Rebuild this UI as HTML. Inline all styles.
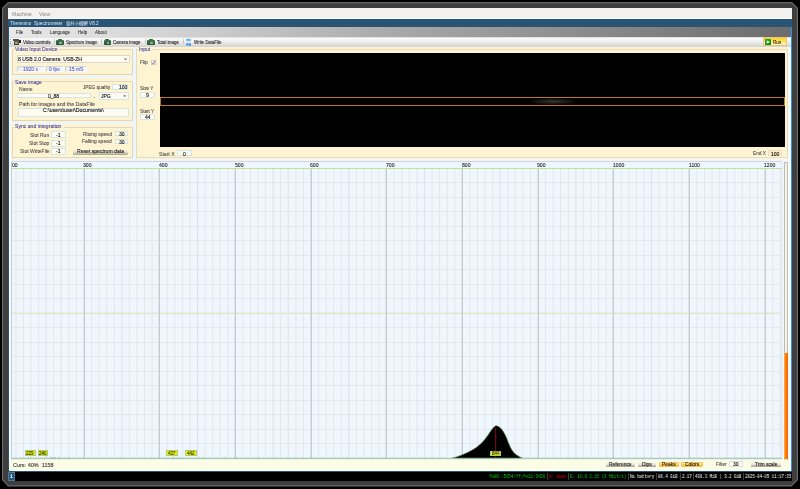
<!DOCTYPE html>
<html><head><meta charset="utf-8">
<style>
html,body{margin:0;padding:0;}
body{width:800px;height:489px;position:relative;overflow:hidden;background:#000;}
.r{position:absolute;box-sizing:border-box;}
.t{position:absolute;white-space:pre;line-height:1;transform-origin:0 0;will-change:transform;-webkit-text-stroke-width:0.12px;}
svg{position:absolute;left:0;top:0;}
</style></head><body>

<svg width="800" height="489" viewBox="0 0 800 489">
<polygon points="8,2 792,2 798,8 798,480 791.5,486.5 8,486.5 2,480 2,8" fill="#686868"/>
<polygon points="8.5,3.2 791.5,3.2 796.8,8.5 796.8,479.5 791,485.3 8.5,485.3 3.2,479.5 3.2,8.5" fill="#3e3e3e"/>
</svg>
<div class="r" style="left:8px;top:8px;width:784.00px;height:472.60px;background:#eef5fd;"></div>
<div class="r" style="left:8px;top:8px;width:784.00px;height:11.00px;background:#f3f2f1;border-bottom:0.6px solid #ffffff;"></div>
<div class="t" style="left:12.00px;top:12.00px;color:#a0a0a0;font-family:'Liberation Sans', sans-serif;font-size:5.3px;">Machine</div>
<div class="t" style="left:39.00px;top:12.00px;color:#a0a0a0;font-family:'Liberation Sans', sans-serif;font-size:5.3px;">View</div>
<div class="r" style="left:8px;top:19.2px;width:784.00px;height:8.10px;background:#285577;"></div>
<div class="t" style="left:9.50px;top:22.00px;color:#dfe8f0;font-family:'Liberation Sans', sans-serif;font-size:4.7px;transform:scaleX(0.95);-webkit-text-stroke-width:0;">Theremino</div>
<div class="t" style="left:33.90px;top:22.00px;color:#dfe8f0;font-family:'Liberation Sans', sans-serif;font-size:4.7px;transform:scaleX(1.02);-webkit-text-stroke-width:0;">Spectrometer</div>
<svg width="800" height="489"><line x1="68.20" y1="21.20" x2="68.20" y2="21.90" stroke="rgba(245,248,252,0.85)" stroke-width="0.55"/><line x1="66.50" y1="22.00" x2="69.90" y2="22.00" stroke="rgba(245,248,252,0.85)" stroke-width="0.55"/><line x1="66.50" y1="22.00" x2="66.50" y2="22.80" stroke="rgba(245,248,252,0.85)" stroke-width="0.55"/><line x1="69.90" y1="22.00" x2="69.90" y2="22.80" stroke="rgba(245,248,252,0.85)" stroke-width="0.55"/><line x1="67.00" y1="23.10" x2="69.40" y2="23.10" stroke="rgba(245,248,252,0.85)" stroke-width="0.55"/><line x1="67.00" y1="23.10" x2="67.00" y2="25.60" stroke="rgba(245,248,252,0.85)" stroke-width="0.55"/><line x1="69.40" y1="23.10" x2="69.40" y2="25.60" stroke="rgba(245,248,252,0.85)" stroke-width="0.55"/><line x1="67.00" y1="25.60" x2="69.40" y2="25.60" stroke="rgba(245,248,252,0.85)" stroke-width="0.55"/><line x1="67.40" y1="24.20" x2="69.00" y2="24.60" stroke="rgba(245,248,252,0.85)" stroke-width="0.55"/><line x1="71.60" y1="21.30" x2="70.80" y2="25.60" stroke="rgba(245,248,252,0.85)" stroke-width="0.55"/><line x1="71.10" y1="22.60" x2="72.40" y2="22.60" stroke="rgba(245,248,252,0.85)" stroke-width="0.55"/><line x1="72.40" y1="22.60" x2="71.40" y2="24.60" stroke="rgba(245,248,252,0.85)" stroke-width="0.55"/><line x1="71.50" y1="23.60" x2="72.20" y2="24.20" stroke="rgba(245,248,252,0.85)" stroke-width="0.55"/><line x1="73.40" y1="21.20" x2="73.40" y2="25.70" stroke="rgba(245,248,252,0.85)" stroke-width="0.55"/><line x1="73.50" y1="23.00" x2="74.50" y2="23.80" stroke="rgba(245,248,252,0.85)" stroke-width="0.55"/><line x1="77.00" y1="21.20" x2="77.00" y2="25.50" stroke="rgba(245,248,252,0.85)" stroke-width="0.55"/><line x1="77.00" y1="25.50" x2="76.50" y2="25.10" stroke="rgba(245,248,252,0.85)" stroke-width="0.55"/><line x1="75.90" y1="22.80" x2="75.30" y2="24.60" stroke="rgba(245,248,252,0.85)" stroke-width="0.55"/><line x1="78.10" y1="22.80" x2="78.80" y2="24.40" stroke="rgba(245,248,252,0.85)" stroke-width="0.55"/><line x1="79.50" y1="21.80" x2="80.60" y2="21.80" stroke="rgba(245,248,252,0.85)" stroke-width="0.55"/><line x1="79.50" y1="21.80" x2="79.50" y2="25.20" stroke="rgba(245,248,252,0.85)" stroke-width="0.55"/><line x1="80.60" y1="21.80" x2="80.60" y2="25.20" stroke="rgba(245,248,252,0.85)" stroke-width="0.55"/><line x1="79.50" y1="23.40" x2="80.60" y2="23.40" stroke="rgba(245,248,252,0.85)" stroke-width="0.55"/><line x1="79.50" y1="25.20" x2="80.60" y2="25.20" stroke="rgba(245,248,252,0.85)" stroke-width="0.55"/><line x1="81.10" y1="21.70" x2="83.30" y2="21.70" stroke="rgba(245,248,252,0.85)" stroke-width="0.55"/><line x1="82.20" y1="21.30" x2="82.20" y2="25.70" stroke="rgba(245,248,252,0.85)" stroke-width="0.55"/><line x1="81.20" y1="23.00" x2="83.20" y2="23.00" stroke="rgba(245,248,252,0.85)" stroke-width="0.55"/><line x1="81.40" y1="24.30" x2="83.00" y2="24.30" stroke="rgba(245,248,252,0.85)" stroke-width="0.55"/><line x1="81.10" y1="25.60" x2="83.30" y2="25.60" stroke="rgba(245,248,252,0.85)" stroke-width="0.55"/><line x1="83.80" y1="21.80" x2="84.90" y2="21.80" stroke="rgba(245,248,252,0.85)" stroke-width="0.55"/><line x1="83.80" y1="21.80" x2="83.80" y2="25.20" stroke="rgba(245,248,252,0.85)" stroke-width="0.55"/><line x1="84.90" y1="21.80" x2="84.90" y2="25.20" stroke="rgba(245,248,252,0.85)" stroke-width="0.55"/><line x1="83.80" y1="23.40" x2="84.90" y2="23.40" stroke="rgba(245,248,252,0.85)" stroke-width="0.55"/><line x1="83.80" y1="25.20" x2="84.90" y2="25.20" stroke="rgba(245,248,252,0.85)" stroke-width="0.55"/><line x1="85.50" y1="21.50" x2="87.40" y2="21.50" stroke="rgba(245,248,252,0.85)" stroke-width="0.55"/><line x1="85.50" y1="21.50" x2="85.50" y2="25.70" stroke="rgba(245,248,252,0.85)" stroke-width="0.55"/><line x1="87.40" y1="21.50" x2="87.40" y2="23.60" stroke="rgba(245,248,252,0.85)" stroke-width="0.55"/><line x1="85.50" y1="22.60" x2="87.40" y2="22.60" stroke="rgba(245,248,252,0.85)" stroke-width="0.55"/><line x1="85.50" y1="23.60" x2="87.40" y2="23.60" stroke="rgba(245,248,252,0.85)" stroke-width="0.55"/><line x1="86.20" y1="23.70" x2="87.60" y2="25.60" stroke="rgba(245,248,252,0.85)" stroke-width="0.55"/></svg>
<div class="t" style="left:89.00px;top:22.00px;color:#dfe8f0;font-family:'Liberation Sans', sans-serif;font-size:4.7px;-webkit-text-stroke-width:0;">V8.2</div>
<div class="r" style="left:7.6px;top:27px;width:1.30px;height:445.00px;background:#285577;"></div>
<div class="r" style="left:790.8px;top:27px;width:1.40px;height:445.00px;background:#2e8ee8;"></div>
<div class="r" style="left:7.6px;top:471px;width:784.40px;height:1.20px;background:#285577;"></div>
<div class="r" style="left:8.9px;top:27px;width:781.90px;height:9.60px;background:linear-gradient(to right,#e8e8e8 0%,#d4d4d4 20%,#a8a8a8 50%,#8a8a8a 75%,#6c6c6c 100%);"></div>
<div class="t" style="left:16.00px;top:31.00px;color:#2a2a2a;font-family:'Liberation Sans', sans-serif;font-size:4.5px;-webkit-text-stroke-width:0.04px;">File</div>
<div class="t" style="left:31.00px;top:31.00px;color:#2a2a2a;font-family:'Liberation Sans', sans-serif;font-size:4.5px;-webkit-text-stroke-width:0.04px;">Tools</div>
<div class="t" style="left:50.00px;top:31.00px;color:#2a2a2a;font-family:'Liberation Sans', sans-serif;font-size:4.5px;-webkit-text-stroke-width:0.04px;">Language</div>
<div class="t" style="left:78.00px;top:31.00px;color:#2a2a2a;font-family:'Liberation Sans', sans-serif;font-size:4.5px;-webkit-text-stroke-width:0.04px;">Help</div>
<div class="t" style="left:95.40px;top:31.00px;color:#2a2a2a;font-family:'Liberation Sans', sans-serif;font-size:4.5px;-webkit-text-stroke-width:0.04px;">About</div>
<div class="r" style="left:8.9px;top:36.5px;width:781.90px;height:10.50px;background:linear-gradient(#d0d0d0 0%,#fafafa 12%,#f0f0f0 45%,#d2d2d3 100%);"></div>
<div class="r" style="left:10.3px;top:38.6px;width:1.2px;height:6.6px;background:repeating-linear-gradient(#9a9a9a 0 1px,transparent 1px 2px);"></div>
<div class="r" style="left:13.0px;top:38.9px;width:5.90px;height:1.80px;background:#505254;"></div>
<div class="r" style="left:13.5px;top:40.6px;width:5.40px;height:4.00px;background:linear-gradient(#606060,#3a3a3a);"></div>
<div class="r" style="left:14.8px;top:42.2px;width:2.80px;height:2.00px;background:#a8a040;"></div>
<div class="r" style="left:18.9px;top:40.0px;width:1.80px;height:3.40px;background:#262626;"></div>
<div class="t" style="left:22.80px;top:41.00px;color:#2a2a2a;font-family:'Liberation Sans', sans-serif;font-size:4.5px;transform:scaleX(0.97);">Video controls</div>
<div class="r" style="left:54px;top:38.2px;width:0.90px;height:7.00px;background:linear-gradient(#e8e8e8,#b8b8b8,#e8e8e8);"></div>
<div class="r" style="left:57.6px;top:38.9px;width:4.2px;height:1.6px;background:#3a6a44;border-radius:0.8px 0.8px 0 0"></div>
<div class="r" style="left:56.4px;top:39.9px;width:7.5px;height:4.9px;background:linear-gradient(#3f7a4a,#24502e);border-radius:0.9px"></div>
<div class="r" style="left:59.4px;top:41.5px;width:2.6px;height:2.0px;background:#9ab49e;border-radius:0.6px"></div>
<div class="t" style="left:65.80px;top:41.00px;color:#2a2a2a;font-family:'Liberation Sans', sans-serif;font-size:4.5px;transform:scaleX(0.95);">Spectrum image</div>
<div class="r" style="left:101px;top:38.2px;width:0.90px;height:7.00px;background:linear-gradient(#e8e8e8,#b8b8b8,#e8e8e8);"></div>
<div class="r" style="left:105.0px;top:38.9px;width:4.2px;height:1.6px;background:#3a6a44;border-radius:0.8px 0.8px 0 0"></div>
<div class="r" style="left:103.8px;top:39.9px;width:7.5px;height:4.9px;background:linear-gradient(#3f7a4a,#24502e);border-radius:0.9px"></div>
<div class="r" style="left:106.8px;top:41.5px;width:2.6px;height:2.0px;background:#9ab49e;border-radius:0.6px"></div>
<div class="t" style="left:113.20px;top:41.00px;color:#2a2a2a;font-family:'Liberation Sans', sans-serif;font-size:4.5px;transform:scaleX(0.93);">Camera image</div>
<div class="r" style="left:145.4px;top:38.2px;width:0.90px;height:7.00px;background:linear-gradient(#e8e8e8,#b8b8b8,#e8e8e8);"></div>
<div class="r" style="left:148.5px;top:38.9px;width:4.2px;height:1.6px;background:#3a6a44;border-radius:0.8px 0.8px 0 0"></div>
<div class="r" style="left:147.3px;top:39.9px;width:7.5px;height:4.9px;background:linear-gradient(#3f7a4a,#24502e);border-radius:0.9px"></div>
<div class="r" style="left:150.3px;top:41.5px;width:2.6px;height:2.0px;background:#9ab49e;border-radius:0.6px"></div>
<div class="t" style="left:156.50px;top:41.00px;color:#2a2a2a;font-family:'Liberation Sans', sans-serif;font-size:4.5px;transform:scaleX(0.95);">Total image</div>
<div class="r" style="left:183.2px;top:38.2px;width:0.90px;height:7.00px;background:linear-gradient(#e8e8e8,#b8b8b8,#e8e8e8);"></div>
<svg width="800" height="489"><path d="M186.2,38.8 h4.6 v2.1 h-4.6 z" fill="#6eb2e6"/><path d="M187.0,40.9 L190.6,40.9 L188.8,43.2 L186.4,43.2 z" fill="#cfe6f7"/><path d="M186.0,43.2 h5.0 v2.4 h-5.0 z" fill="#58a4e0"/><path d="M189.8,44.0 l1.4,1.0 l-1.4,0.9 z" fill="#2a78c8"/></svg>
<div class="t" style="left:194.20px;top:41.00px;color:#2a2a2a;font-family:'Liberation Sans', sans-serif;font-size:4.5px;transform:scaleX(0.96);">Write DataFile</div>
<div class="r" style="left:762.7px;top:37.3px;width:24.00px;height:9.10px;background:linear-gradient(#ffd21e,#ffe36a 50%,#fff6cf);border:0.7px solid #ecc27a;"></div>
<div class="r" style="left:764.7px;top:38.9px;width:6.50px;height:6.10px;background:linear-gradient(#1aa62a,#0a8a1c);border-radius:0.6px;"></div>
<svg width="800" height="489"><polygon points="766.6,40.2 769.9,42.0 766.6,43.8" fill="#f4fff4"/></svg>
<div class="t" style="left:773.40px;top:41.00px;color:#3d3812;font-family:'Liberation Sans', sans-serif;font-size:4.6px;">Run</div>
<div class="r" style="left:8.9px;top:47.0px;width:781.90px;height:424.00px;background:#eef5fd;"></div>
<div class="r" style="left:8.9px;top:47.0px;width:2.40px;height:424.00px;background:#f7fbff;"></div>
<div class="r" style="left:788.4px;top:47.0px;width:2.40px;height:424.00px;background:#f7fbff;"></div>
<div class="r" style="left:11.3px;top:46.8px;width:121.50px;height:28.80px;background:#fff4d1;"></div>
<div class="r" style="left:11.5px;top:49.4px;width:121.10px;height:25.90px;border:0.8px solid #dcd6c2;"></div>
<div class="r" style="left:13.8px;top:48.4px;width:45.40px;height:2.20px;background:#fff4d1;"></div>
<div class="t" style="left:15.00px;top:47.00px;color:#4a4aa6;font-family:'Liberation Sans', sans-serif;font-size:5.1px;">Video Input Device</div>
<div class="r" style="left:16.5px;top:55.0px;width:113.70px;height:8.40px;background:#fffcf4;border:0.7px solid #ddd8c8;"></div>
<div class="t" style="left:18.20px;top:57.00px;color:#111111;font-family:'Liberation Sans', sans-serif;font-size:5.05px;">8 USB 2.0 Camera: USB-ZH</div>
<svg width="800" height="489"><polygon points="123.6,58.4 127.4,58.4 125.5,60.4" fill="#8a8a8a"/></svg>
<div class="r" style="left:16.5px;top:66.2px;width:28.00px;height:5.60px;background:linear-gradient(90deg,#eceef2,#f4f6fa);border:0.7px solid;border-color:#d2d4d6 #fafbfc #fafbfc #d2d4d6;"></div>
<div class="t" style="left:22.99px;top:67.00px;color:#4a4ac4;font-family:'Liberation Sans', sans-serif;font-size:5.0px;-webkit-text-stroke-width:0.03px;">1920 x</div>
<div class="r" style="left:46px;top:66.2px;width:17.50px;height:5.60px;background:linear-gradient(90deg,#eceef2,#f4f6fa);border:0.7px solid;border-color:#d2d4d6 #fafbfc #fafbfc #d2d4d6;"></div>
<div class="t" style="left:49.33px;top:67.00px;color:#4a4ac4;font-family:'Liberation Sans', sans-serif;font-size:5.0px;-webkit-text-stroke-width:0.03px;">0 fps</div>
<div class="r" style="left:65px;top:66.2px;width:22.00px;height:5.60px;background:linear-gradient(90deg,#eceef2,#f4f6fa);border:0.7px solid;border-color:#d2d4d6 #fafbfc #fafbfc #d2d4d6;"></div>
<div class="t" style="left:68.77px;top:67.00px;color:#4a4ac4;font-family:'Liberation Sans', sans-serif;font-size:5.0px;-webkit-text-stroke-width:0.03px;">15 mS</div>
<div class="r" style="left:11.3px;top:78.2px;width:121.50px;height:43.40px;background:#fff4d1;"></div>
<div class="r" style="left:11.5px;top:81.3px;width:121.10px;height:40.00px;border:0.8px solid #dcd6c2;"></div>
<div class="r" style="left:13.8px;top:80.3px;width:29.40px;height:2.20px;background:#fff4d1;"></div>
<div class="t" style="left:15.00px;top:80.00px;color:#4a4aa6;font-family:'Liberation Sans', sans-serif;font-size:5.1px;">Save image</div>
<div class="t" style="left:19.00px;top:87.00px;color:#565656;font-family:'Liberation Sans', sans-serif;font-size:5.05px;">Name</div>
<div class="t" style="left:83.00px;top:86.00px;color:#565656;font-family:'Liberation Sans', sans-serif;font-size:4.7px;">JPEG quality</div>
<div class="r" style="left:111.6px;top:83.6px;width:16.60px;height:6.70px;background:#fffbf0;border:0.7px solid #d2e6e6;"></div>
<div class="t" style="left:118.66px;top:85.00px;color:#111111;font-family:'Liberation Sans', sans-serif;font-size:5.0px;">100</div>
<div class="r" style="left:16.5px;top:92.8px;width:74.70px;height:5.70px;background:#fffbf0;border:0.7px solid #d2e6e6;"></div>
<div class="t" style="left:47.94px;top:94.00px;color:#111111;font-family:'Liberation Sans', sans-serif;font-size:5.0px;">0_88</div>
<div class="t" style="left:93.80px;top:94.00px;color:#444;font-family:'Liberation Sans', sans-serif;font-size:5.0px;">.</div>
<div class="r" style="left:99.4px;top:91.8px;width:29.80px;height:8.20px;background:#fffbf0;border:0.7px solid #d2e6e6;"></div>
<div class="t" style="left:100.60px;top:94.00px;color:#111111;font-family:'Liberation Sans', sans-serif;font-size:5.0px;">JPG</div>
<svg width="800" height="489"><polygon points="122.8,95.2 126.6,95.2 124.7,97.2" fill="#8a8a8a"/></svg>
<div class="t" style="left:19.00px;top:102.00px;color:#565656;font-family:'Liberation Sans', sans-serif;font-size:5.2px;">Path for images and the DataFile</div>
<div class="r" style="left:17.5px;top:107.6px;width:111.70px;height:9.90px;background:#fffbf0;border:0.7px solid #d2e6e6;"></div>
<div class="t" style="left:43.00px;top:108.00px;color:#111111;font-family:'Liberation Sans', sans-serif;font-size:5.25px;">C:\users\user\Documents\</div>
<div class="r" style="left:11.3px;top:123.6px;width:121.50px;height:35.00px;background:#fff4d1;"></div>
<div class="r" style="left:11.5px;top:126.6px;width:121.10px;height:31.70px;border:0.8px solid #dcd6c2;"></div>
<div class="r" style="left:13.8px;top:125.6px;width:50.40px;height:2.20px;background:#fff4d1;"></div>
<div class="t" style="left:15.00px;top:124.00px;color:#4a4aa6;font-family:'Liberation Sans', sans-serif;font-size:5.1px;">Sync and integration</div>
<div class="t" style="left:30.01px;top:133.00px;color:#565656;font-family:'Liberation Sans', sans-serif;font-size:5.0px;">Slot Run</div>
<div class="r" style="left:51px;top:131.2px;width:15.00px;height:6.80px;background:#fffbf0;border:0.7px solid #d2e6e6;"></div>
<div class="t" style="left:56.27px;top:133.00px;color:#111111;font-family:'Liberation Sans', sans-serif;font-size:5.0px;">-1</div>
<div class="t" style="left:28.90px;top:141.00px;color:#565656;font-family:'Liberation Sans', sans-serif;font-size:5.0px;">Slot Stop</div>
<div class="r" style="left:51px;top:140.0px;width:15.00px;height:6.60px;background:#fffbf0;border:0.7px solid #d2e6e6;"></div>
<div class="t" style="left:56.27px;top:141.00px;color:#111111;font-family:'Liberation Sans', sans-serif;font-size:5.0px;">-1</div>
<div class="t" style="left:19.56px;top:149.00px;color:#565656;font-family:'Liberation Sans', sans-serif;font-size:5.0px;">Slot WriteFile</div>
<div class="r" style="left:51px;top:148.2px;width:15.00px;height:6.60px;background:#fffbf0;border:0.7px solid #d2e6e6;"></div>
<div class="t" style="left:56.27px;top:149.00px;color:#111111;font-family:'Liberation Sans', sans-serif;font-size:5.0px;">-1</div>
<div class="t" style="left:83.29px;top:132.00px;color:#565656;font-family:'Liberation Sans', sans-serif;font-size:5.0px;">Rising speed</div>
<div class="r" style="left:115px;top:130.5px;width:12.60px;height:5.60px;background:#fffbf0;border:0.7px solid #d2e6e6;"></div>
<div class="t" style="left:118.52px;top:132.00px;color:#111111;font-family:'Liberation Sans', sans-serif;font-size:5.0px;">30</div>
<div class="t" style="left:82.45px;top:139.00px;color:#565656;font-family:'Liberation Sans', sans-serif;font-size:5.0px;">Falling speed</div>
<div class="r" style="left:115px;top:138.5px;width:12.60px;height:5.60px;background:#fffbf0;border:0.7px solid #d2e6e6;"></div>
<div class="t" style="left:118.52px;top:140.00px;color:#111111;font-family:'Liberation Sans', sans-serif;font-size:5.0px;">30</div>
<div class="r" style="left:72.5px;top:148.5px;width:55.10px;height:6.10px;background:linear-gradient(#fffbe6,#ece6c8 45%,#a8a498);border-radius:0.8px;"></div>
<div class="t" style="left:76.50px;top:149.00px;color:#1c1c1c;font-family:'Liberation Sans', sans-serif;font-size:5.1px;">Reset spectrum data</div>
<div class="r" style="left:135.5px;top:46.8px;width:652.90px;height:111.80px;background:#fff4d1;"></div>
<div class="r" style="left:135.6px;top:49.2px;width:652.7px;height:109.3px;border:0.8px solid #e2dcc6;border-top-color:#e2dcc6;"></div>
<div class="r" style="left:138px;top:47.8px;width:14.00px;height:3.70px;background:#fff4d1;"></div>
<div class="t" style="left:139.20px;top:47.00px;color:#4a4aa6;font-family:'Liberation Sans', sans-serif;font-size:5.0px;">Input</div>
<div class="t" style="left:139.70px;top:61.00px;color:#565656;font-family:'Liberation Sans', sans-serif;font-size:4.8px;">Flip</div>
<div class="r" style="left:151px;top:59.8px;width:5.20px;height:5.20px;background:#f6f6f2;border:0.6px solid #c8ccd0;"></div>
<svg width="800" height="489"><polyline points="152.2,62.6 153.3,63.9 155.2,60.8" fill="none" stroke="#505050" stroke-width="0.7"/></svg>
<div class="t" style="left:140.00px;top:87.00px;color:#565656;font-family:'Liberation Sans', sans-serif;font-size:4.7px;">Size Y</div>
<div class="r" style="left:140.2px;top:92.2px;width:14.40px;height:5.60px;background:#fffbf0;border:0.7px solid #d2e6e6;"></div>
<div class="t" style="left:146.01px;top:93.00px;color:#111111;font-family:'Liberation Sans', sans-serif;font-size:5.0px;">9</div>
<div class="t" style="left:140.00px;top:110.00px;color:#565656;font-family:'Liberation Sans', sans-serif;font-size:4.7px;">Start Y</div>
<div class="r" style="left:140.2px;top:114.2px;width:14.40px;height:5.60px;background:#fffbf0;border:0.7px solid #d2e6e6;"></div>
<div class="t" style="left:144.62px;top:115.00px;color:#111111;font-family:'Liberation Sans', sans-serif;font-size:5.0px;">44</div>
<div class="r" style="left:159.6px;top:52.7px;width:625.70px;height:94.10px;background:#000000;"></div>
<div class="r" style="left:528px;top:97.6px;width:50.00px;height:7.80px;background:radial-gradient(ellipse at 50% 50%, rgba(52,52,50,1) 0%, rgba(36,36,34,0.8) 35%, rgba(0,0,0,0) 70%);"></div>
<div class="r" style="left:159.9px;top:96.9px;width:625.30px;height:9.30px;background:transparent;border:1px solid #c47812;"></div>
<div class="t" style="left:159.00px;top:152.00px;color:#565656;font-family:'Liberation Sans', sans-serif;font-size:5.1px;">Start X</div>
<div class="r" style="left:177.2px;top:150.1px;width:14.60px;height:6.10px;background:#fffbf0;border:0.7px solid #d2e6e6;"></div>
<div class="t" style="left:183.11px;top:152.00px;color:#111111;font-family:'Liberation Sans', sans-serif;font-size:5.0px;">0</div>
<div class="t" style="left:753.00px;top:152.00px;color:#565656;font-family:'Liberation Sans', sans-serif;font-size:4.8px;">End X</div>
<div class="r" style="left:768px;top:150.0px;width:14.20px;height:6.20px;background:#fde9c4;border:0.7px solid #e8e0c8;"></div>
<div class="t" style="left:770.93px;top:152.00px;color:#111111;font-family:'Liberation Sans', sans-serif;font-size:5.0px;">100</div>
<svg width="800" height="489" viewBox="0 0 800 489" shape-rendering="auto">
<rect x="11.5" y="161.5" width="770.1" height="298.1" fill="#eff6fe"/>
<rect x="11.5" y="182" width="770.1" height="1" fill="#e4e8ec"/>
<rect x="11.5" y="197" width="770.1" height="1" fill="#e4e8ec"/>
<rect x="11.5" y="211" width="770.1" height="1" fill="#e4e8ec"/>
<rect x="11.5" y="226" width="770.1" height="1" fill="#e4e8ec"/>
<rect x="11.5" y="240" width="770.1" height="1" fill="#e4e8ec"/>
<rect x="11.5" y="255" width="770.1" height="1" fill="#e4e8ec"/>
<rect x="11.5" y="269" width="770.1" height="1" fill="#e4e8ec"/>
<rect x="11.5" y="284" width="770.1" height="1" fill="#e4e8ec"/>
<rect x="11.5" y="298" width="770.1" height="1" fill="#e4e8ec"/>
<rect x="11.5" y="312.5" width="770.1" height="1.6" fill="#dcecc8"/>
<rect x="11.5" y="327" width="770.1" height="1" fill="#e4e8ec"/>
<rect x="11.5" y="342" width="770.1" height="1" fill="#e4e8ec"/>
<rect x="11.5" y="356" width="770.1" height="1" fill="#e4e8ec"/>
<rect x="11.5" y="371" width="770.1" height="1" fill="#e4e8ec"/>
<rect x="11.5" y="385" width="770.1" height="1" fill="#e4e8ec"/>
<rect x="11.5" y="400" width="770.1" height="1" fill="#e4e8ec"/>
<rect x="11.5" y="414" width="770.1" height="1" fill="#e4e8ec"/>
<rect x="11.5" y="429" width="770.1" height="1" fill="#e4e8ec"/>
<rect x="11.5" y="443" width="770.1" height="1" fill="#e4e8ec"/>
<line x1="15.90" y1="168" x2="15.90" y2="458.3" stroke="#e3e7eb" stroke-width="1.0"/>
<line x1="23.46" y1="168" x2="23.46" y2="458.3" stroke="#e3e7eb" stroke-width="1.0"/>
<line x1="31.03" y1="168" x2="31.03" y2="458.3" stroke="#e3e7eb" stroke-width="1.0"/>
<line x1="38.60" y1="168" x2="38.60" y2="458.3" stroke="#e3e7eb" stroke-width="1.0"/>
<line x1="46.16" y1="168" x2="46.16" y2="458.3" stroke="#dde3ea" stroke-width="1.1"/>
<line x1="53.73" y1="168" x2="53.73" y2="458.3" stroke="#e3e7eb" stroke-width="1.0"/>
<line x1="61.30" y1="168" x2="61.30" y2="458.3" stroke="#e3e7eb" stroke-width="1.0"/>
<line x1="68.87" y1="168" x2="68.87" y2="458.3" stroke="#e3e7eb" stroke-width="1.0"/>
<line x1="76.43" y1="168" x2="76.43" y2="458.3" stroke="#e3e7eb" stroke-width="1.0"/>
<rect x="84" y="168" width="1" height="290.30" fill="#c5cbd2"/>
<rect x="83" y="168" width="1" height="290.30" fill="#dfe4ea"/>
<line x1="91.57" y1="168" x2="91.57" y2="458.3" stroke="#e3e7eb" stroke-width="1.0"/>
<line x1="99.13" y1="168" x2="99.13" y2="458.3" stroke="#e3e7eb" stroke-width="1.0"/>
<line x1="106.70" y1="168" x2="106.70" y2="458.3" stroke="#e3e7eb" stroke-width="1.0"/>
<line x1="114.27" y1="168" x2="114.27" y2="458.3" stroke="#e3e7eb" stroke-width="1.0"/>
<line x1="121.83" y1="168" x2="121.83" y2="458.3" stroke="#dde3ea" stroke-width="1.1"/>
<line x1="129.40" y1="168" x2="129.40" y2="458.3" stroke="#e3e7eb" stroke-width="1.0"/>
<line x1="136.97" y1="168" x2="136.97" y2="458.3" stroke="#e3e7eb" stroke-width="1.0"/>
<line x1="144.54" y1="168" x2="144.54" y2="458.3" stroke="#e3e7eb" stroke-width="1.0"/>
<line x1="152.10" y1="168" x2="152.10" y2="458.3" stroke="#e3e7eb" stroke-width="1.0"/>
<rect x="159" y="168" width="1" height="290.30" fill="#c5cbd2"/>
<rect x="158" y="168" width="1" height="290.30" fill="#dfe4ea"/>
<line x1="167.24" y1="168" x2="167.24" y2="458.3" stroke="#e3e7eb" stroke-width="1.0"/>
<line x1="174.80" y1="168" x2="174.80" y2="458.3" stroke="#e3e7eb" stroke-width="1.0"/>
<line x1="182.37" y1="168" x2="182.37" y2="458.3" stroke="#e3e7eb" stroke-width="1.0"/>
<line x1="189.94" y1="168" x2="189.94" y2="458.3" stroke="#e3e7eb" stroke-width="1.0"/>
<line x1="197.50" y1="168" x2="197.50" y2="458.3" stroke="#dde3ea" stroke-width="1.1"/>
<line x1="205.07" y1="168" x2="205.07" y2="458.3" stroke="#e3e7eb" stroke-width="1.0"/>
<line x1="212.64" y1="168" x2="212.64" y2="458.3" stroke="#e3e7eb" stroke-width="1.0"/>
<line x1="220.21" y1="168" x2="220.21" y2="458.3" stroke="#e3e7eb" stroke-width="1.0"/>
<line x1="227.77" y1="168" x2="227.77" y2="458.3" stroke="#e3e7eb" stroke-width="1.0"/>
<rect x="235" y="168" width="1" height="290.30" fill="#c5cbd2"/>
<rect x="234" y="168" width="1" height="290.30" fill="#dfe4ea"/>
<line x1="242.91" y1="168" x2="242.91" y2="458.3" stroke="#e3e7eb" stroke-width="1.0"/>
<line x1="250.47" y1="168" x2="250.47" y2="458.3" stroke="#e3e7eb" stroke-width="1.0"/>
<line x1="258.04" y1="168" x2="258.04" y2="458.3" stroke="#e3e7eb" stroke-width="1.0"/>
<line x1="265.61" y1="168" x2="265.61" y2="458.3" stroke="#e3e7eb" stroke-width="1.0"/>
<line x1="273.18" y1="168" x2="273.18" y2="458.3" stroke="#dde3ea" stroke-width="1.1"/>
<line x1="280.74" y1="168" x2="280.74" y2="458.3" stroke="#e3e7eb" stroke-width="1.0"/>
<line x1="288.31" y1="168" x2="288.31" y2="458.3" stroke="#e3e7eb" stroke-width="1.0"/>
<line x1="295.88" y1="168" x2="295.88" y2="458.3" stroke="#e3e7eb" stroke-width="1.0"/>
<line x1="303.44" y1="168" x2="303.44" y2="458.3" stroke="#e3e7eb" stroke-width="1.0"/>
<rect x="311" y="168" width="1" height="290.30" fill="#c5cbd2"/>
<rect x="310" y="168" width="1" height="290.30" fill="#dfe4ea"/>
<line x1="318.58" y1="168" x2="318.58" y2="458.3" stroke="#e3e7eb" stroke-width="1.0"/>
<line x1="326.14" y1="168" x2="326.14" y2="458.3" stroke="#e3e7eb" stroke-width="1.0"/>
<line x1="333.71" y1="168" x2="333.71" y2="458.3" stroke="#e3e7eb" stroke-width="1.0"/>
<line x1="341.28" y1="168" x2="341.28" y2="458.3" stroke="#e3e7eb" stroke-width="1.0"/>
<line x1="348.85" y1="168" x2="348.85" y2="458.3" stroke="#dde3ea" stroke-width="1.1"/>
<line x1="356.41" y1="168" x2="356.41" y2="458.3" stroke="#e3e7eb" stroke-width="1.0"/>
<line x1="363.98" y1="168" x2="363.98" y2="458.3" stroke="#e3e7eb" stroke-width="1.0"/>
<line x1="371.55" y1="168" x2="371.55" y2="458.3" stroke="#e3e7eb" stroke-width="1.0"/>
<line x1="379.11" y1="168" x2="379.11" y2="458.3" stroke="#e3e7eb" stroke-width="1.0"/>
<rect x="386" y="168" width="1" height="290.30" fill="#c5cbd2"/>
<rect x="385" y="168" width="1" height="290.30" fill="#dfe4ea"/>
<line x1="394.25" y1="168" x2="394.25" y2="458.3" stroke="#e3e7eb" stroke-width="1.0"/>
<line x1="401.81" y1="168" x2="401.81" y2="458.3" stroke="#e3e7eb" stroke-width="1.0"/>
<line x1="409.38" y1="168" x2="409.38" y2="458.3" stroke="#e3e7eb" stroke-width="1.0"/>
<line x1="416.95" y1="168" x2="416.95" y2="458.3" stroke="#e3e7eb" stroke-width="1.0"/>
<line x1="424.52" y1="168" x2="424.52" y2="458.3" stroke="#dde3ea" stroke-width="1.1"/>
<line x1="432.08" y1="168" x2="432.08" y2="458.3" stroke="#e3e7eb" stroke-width="1.0"/>
<line x1="439.65" y1="168" x2="439.65" y2="458.3" stroke="#e3e7eb" stroke-width="1.0"/>
<line x1="447.22" y1="168" x2="447.22" y2="458.3" stroke="#e3e7eb" stroke-width="1.0"/>
<line x1="454.78" y1="168" x2="454.78" y2="458.3" stroke="#e3e7eb" stroke-width="1.0"/>
<rect x="462" y="168" width="1" height="290.30" fill="#c5cbd2"/>
<rect x="461" y="168" width="1" height="290.30" fill="#dfe4ea"/>
<line x1="469.92" y1="168" x2="469.92" y2="458.3" stroke="#e3e7eb" stroke-width="1.0"/>
<line x1="477.48" y1="168" x2="477.48" y2="458.3" stroke="#e3e7eb" stroke-width="1.0"/>
<line x1="485.05" y1="168" x2="485.05" y2="458.3" stroke="#e3e7eb" stroke-width="1.0"/>
<line x1="492.62" y1="168" x2="492.62" y2="458.3" stroke="#e3e7eb" stroke-width="1.0"/>
<line x1="500.19" y1="168" x2="500.19" y2="458.3" stroke="#dde3ea" stroke-width="1.1"/>
<line x1="507.75" y1="168" x2="507.75" y2="458.3" stroke="#e3e7eb" stroke-width="1.0"/>
<line x1="515.32" y1="168" x2="515.32" y2="458.3" stroke="#e3e7eb" stroke-width="1.0"/>
<line x1="522.89" y1="168" x2="522.89" y2="458.3" stroke="#e3e7eb" stroke-width="1.0"/>
<line x1="530.45" y1="168" x2="530.45" y2="458.3" stroke="#e3e7eb" stroke-width="1.0"/>
<rect x="538" y="168" width="1" height="290.30" fill="#c5cbd2"/>
<rect x="537" y="168" width="1" height="290.30" fill="#dfe4ea"/>
<line x1="545.59" y1="168" x2="545.59" y2="458.3" stroke="#e3e7eb" stroke-width="1.0"/>
<line x1="553.15" y1="168" x2="553.15" y2="458.3" stroke="#e3e7eb" stroke-width="1.0"/>
<line x1="560.72" y1="168" x2="560.72" y2="458.3" stroke="#e3e7eb" stroke-width="1.0"/>
<line x1="568.29" y1="168" x2="568.29" y2="458.3" stroke="#e3e7eb" stroke-width="1.0"/>
<line x1="575.86" y1="168" x2="575.86" y2="458.3" stroke="#dde3ea" stroke-width="1.1"/>
<line x1="583.42" y1="168" x2="583.42" y2="458.3" stroke="#e3e7eb" stroke-width="1.0"/>
<line x1="590.99" y1="168" x2="590.99" y2="458.3" stroke="#e3e7eb" stroke-width="1.0"/>
<line x1="598.56" y1="168" x2="598.56" y2="458.3" stroke="#e3e7eb" stroke-width="1.0"/>
<line x1="606.12" y1="168" x2="606.12" y2="458.3" stroke="#e3e7eb" stroke-width="1.0"/>
<rect x="613" y="168" width="1" height="290.30" fill="#c5cbd2"/>
<rect x="612" y="168" width="1" height="290.30" fill="#dfe4ea"/>
<line x1="621.26" y1="168" x2="621.26" y2="458.3" stroke="#e3e7eb" stroke-width="1.0"/>
<line x1="628.82" y1="168" x2="628.82" y2="458.3" stroke="#e3e7eb" stroke-width="1.0"/>
<line x1="636.39" y1="168" x2="636.39" y2="458.3" stroke="#e3e7eb" stroke-width="1.0"/>
<line x1="643.96" y1="168" x2="643.96" y2="458.3" stroke="#e3e7eb" stroke-width="1.0"/>
<line x1="651.52" y1="168" x2="651.52" y2="458.3" stroke="#dde3ea" stroke-width="1.1"/>
<line x1="659.09" y1="168" x2="659.09" y2="458.3" stroke="#e3e7eb" stroke-width="1.0"/>
<line x1="666.66" y1="168" x2="666.66" y2="458.3" stroke="#e3e7eb" stroke-width="1.0"/>
<line x1="674.23" y1="168" x2="674.23" y2="458.3" stroke="#e3e7eb" stroke-width="1.0"/>
<line x1="681.79" y1="168" x2="681.79" y2="458.3" stroke="#e3e7eb" stroke-width="1.0"/>
<rect x="689" y="168" width="1" height="290.30" fill="#c5cbd2"/>
<rect x="688" y="168" width="1" height="290.30" fill="#dfe4ea"/>
<line x1="696.93" y1="168" x2="696.93" y2="458.3" stroke="#e3e7eb" stroke-width="1.0"/>
<line x1="704.49" y1="168" x2="704.49" y2="458.3" stroke="#e3e7eb" stroke-width="1.0"/>
<line x1="712.06" y1="168" x2="712.06" y2="458.3" stroke="#e3e7eb" stroke-width="1.0"/>
<line x1="719.63" y1="168" x2="719.63" y2="458.3" stroke="#e3e7eb" stroke-width="1.0"/>
<line x1="727.20" y1="168" x2="727.20" y2="458.3" stroke="#dde3ea" stroke-width="1.1"/>
<line x1="734.76" y1="168" x2="734.76" y2="458.3" stroke="#e3e7eb" stroke-width="1.0"/>
<line x1="742.33" y1="168" x2="742.33" y2="458.3" stroke="#e3e7eb" stroke-width="1.0"/>
<line x1="749.90" y1="168" x2="749.90" y2="458.3" stroke="#e3e7eb" stroke-width="1.0"/>
<line x1="757.46" y1="168" x2="757.46" y2="458.3" stroke="#e3e7eb" stroke-width="1.0"/>
<rect x="765" y="168" width="1" height="290.30" fill="#c5cbd2"/>
<rect x="764" y="168" width="1" height="290.30" fill="#dfe4ea"/>
<line x1="772.60" y1="168" x2="772.60" y2="458.3" stroke="#e3e7eb" stroke-width="1.0"/>
<line x1="780.16" y1="168" x2="780.16" y2="458.3" stroke="#e3e7eb" stroke-width="1.0"/>
<rect x="11" y="161.5" width="1" height="298.1" fill="#c8ccd1"/>
<rect x="11.5" y="161" width="770.1" height="1" fill="#d2d6db"/>
<line x1="781.6" y1="161.5" x2="781.6" y2="459.6" stroke="#dde2e8" stroke-width="0.8"/>
<rect x="11.5" y="168" width="770.1" height="1" fill="#c2e0a0"/>
<path d="M452.0,458.3 C453.83,457.67 459.50,455.97 463,454.5 C466.50,453.03 470.50,450.92 473,449.5 C475.50,448.08 476.33,447.33 478,446 C479.67,444.67 481.33,443.33 483,441.5 C484.67,439.67 486.67,436.82 488,435 C489.33,433.18 490.00,431.93 491,430.6 C492.00,429.27 493.08,427.82 494,427.0 C494.92,426.18 495.50,425.62 496.5,425.7 C497.50,425.78 498.92,426.62 500,427.5 C501.08,428.38 502.00,429.50 503,431 C504.00,432.50 505.00,434.33 506,436.5 C507.00,438.67 508.00,441.75 509,444 C510.00,446.25 510.83,448.25 512,450 C513.17,451.75 514.25,453.12 516,454.5 C517.75,455.88 521.42,457.67 522.5,458.3 Z" fill="#000" stroke="#5aa05a" stroke-width="0.6"/>
<line x1="495.7" y1="427.2" x2="495.7" y2="458.3" stroke="#b01010" stroke-width="0.8"/>
<line x1="11.5" y1="458.3" x2="781.6" y2="458.3" stroke="#6cb46c" stroke-width="0.9"/>
<rect x="11.5" y="458.75" width="770.1" height="0.8500000000000114" fill="#e6eaf2"/>
<polyline points="50.5,458.3 52.0,457.5 53.5,458.3" fill="none" stroke="#6cb46c" stroke-width="0.6"/>
<polyline points="54,458.3 55.0,457.7 56,458.3" fill="none" stroke="#6cb46c" stroke-width="0.6"/>
<polyline points="58,458.3 59.0,457.8 60,458.3" fill="none" stroke="#6cb46c" stroke-width="0.6"/>
<polyline points="68,458.3 68.75,457.8 69.5,458.3" fill="none" stroke="#6cb46c" stroke-width="0.6"/>
<polyline points="172,458.3 173.0,457.5 174,458.3" fill="none" stroke="#6cb46c" stroke-width="0.6"/>
<polyline points="178,458.3 178.75,457.8 179.5,458.3" fill="none" stroke="#6cb46c" stroke-width="0.6"/>
<polyline points="199,458.3 199.75,457.7 200.5,458.3" fill="none" stroke="#6cb46c" stroke-width="0.6"/>
<polyline points="203,458.3 203.75,457.8 204.5,458.3" fill="none" stroke="#6cb46c" stroke-width="0.6"/>
<polyline points="225,458.3 225.6,457.90000000000003 226.2,458.3" fill="none" stroke="#6cb46c" stroke-width="0.6"/>
<polyline points="236,458.3 236.6,457.90000000000003 237.2,458.3" fill="none" stroke="#6cb46c" stroke-width="0.6"/>
<polyline points="258,458.3 258.6,457.90000000000003 259.2,458.3" fill="none" stroke="#6cb46c" stroke-width="0.6"/>
</svg>
<div class="t" style="left:83.30px;top:163.00px;color:#2c2c2c;font-family:'Liberation Sans', sans-serif;font-size:5.1px;">300</div>
<div class="t" style="left:158.97px;top:163.00px;color:#2c2c2c;font-family:'Liberation Sans', sans-serif;font-size:5.1px;">400</div>
<div class="t" style="left:234.64px;top:163.00px;color:#2c2c2c;font-family:'Liberation Sans', sans-serif;font-size:5.1px;">500</div>
<div class="t" style="left:310.31px;top:163.00px;color:#2c2c2c;font-family:'Liberation Sans', sans-serif;font-size:5.1px;">600</div>
<div class="t" style="left:385.98px;top:163.00px;color:#2c2c2c;font-family:'Liberation Sans', sans-serif;font-size:5.1px;">700</div>
<div class="t" style="left:461.65px;top:163.00px;color:#2c2c2c;font-family:'Liberation Sans', sans-serif;font-size:5.1px;">800</div>
<div class="t" style="left:537.32px;top:163.00px;color:#2c2c2c;font-family:'Liberation Sans', sans-serif;font-size:5.1px;">900</div>
<div class="t" style="left:612.99px;top:163.00px;color:#2c2c2c;font-family:'Liberation Sans', sans-serif;font-size:5.1px;">1000</div>
<div class="t" style="left:688.66px;top:163.00px;color:#2c2c2c;font-family:'Liberation Sans', sans-serif;font-size:5.1px;">1100</div>
<div class="t" style="left:764.33px;top:163.00px;color:#2c2c2c;font-family:'Liberation Sans', sans-serif;font-size:5.1px;">1200</div>
<div class="t" style="left:12.00px;top:163.00px;color:#2c2c2c;font-family:'Liberation Sans', sans-serif;font-size:5.1px;">00</div>
<div class="r" style="left:24.5px;top:450.2px;width:11.10px;height:5.80px;background:#f2f200;border:0.5px solid #a8cc88;"></div>
<div class="t" style="left:26.36px;top:452.00px;color:#262600;font-family:'Liberation Sans', sans-serif;font-size:4.8px;transform:scaleX(0.92);">229</div>
<div class="r" style="left:37.5px;top:450.2px;width:10.60px;height:5.80px;background:#f2f200;border:0.5px solid #a8cc88;"></div>
<div class="t" style="left:39.11px;top:452.00px;color:#262600;font-family:'Liberation Sans', sans-serif;font-size:4.8px;transform:scaleX(0.92);">246</div>
<div class="r" style="left:166.1px;top:450.1px;width:11.70px;height:5.80px;background:#f2f200;border:0.5px solid #a8cc88;"></div>
<div class="t" style="left:168.26px;top:452.00px;color:#262600;font-family:'Liberation Sans', sans-serif;font-size:4.8px;transform:scaleX(0.92);">417</div>
<div class="r" style="left:185.2px;top:450.1px;width:11.70px;height:5.80px;background:#f2f200;border:0.5px solid #a8cc88;"></div>
<div class="t" style="left:187.36px;top:452.00px;color:#262600;font-family:'Liberation Sans', sans-serif;font-size:4.8px;transform:scaleX(0.92);">442</div>
<div class="r" style="left:490.0px;top:450.6px;width:10.90px;height:5.70px;background:#f2f200;border:0.5px solid #a8cc88;"></div>
<div class="t" style="left:491.76px;top:452.00px;color:#262600;font-family:'Liberation Sans', sans-serif;font-size:4.8px;transform:scaleX(0.92);">844</div>
<div class="r" style="left:783.6px;top:161.5px;width:4.60px;height:299.70px;background:#f4f2da;border:0.7px solid #bdbdbd;"></div>
<div class="r" style="left:784.2px;top:353.3px;width:3.40px;height:105.70px;background:linear-gradient(90deg,#ffb060,#ff7a00 45%,#f06a00);"></div>
<div class="r" style="left:8.9px;top:459.6px;width:781.90px;height:11.40px;background:#fdfce6;"></div>
<div class="t" style="left:13.00px;top:463.00px;color:#3a3a3a;font-family:'Liberation Sans', sans-serif;font-size:5.5px;">Curs: 40%  1158</div>
<div class="r" style="left:606px;top:461.9px;width:29.00px;height:5.10px;background:linear-gradient(#fbfaf0,#e6e3d6 50%,#9c9a94);border-radius:1px;"></div>
<div class="t" style="left:609.21px;top:463.00px;color:#1e1e1e;font-family:'Liberation Sans', sans-serif;font-size:4.9px;">Reference</div>
<div class="r" style="left:638.1px;top:461.9px;width:17.50px;height:5.10px;background:linear-gradient(#fbfaf0,#e6e3d6 50%,#9c9a94);border-radius:1px;"></div>
<div class="t" style="left:641.95px;top:463.00px;color:#1e1e1e;font-family:'Liberation Sans', sans-serif;font-size:4.9px;">Dips</div>
<div class="r" style="left:658.7px;top:461.9px;width:20.10px;height:5.10px;background:linear-gradient(#fff0a0,#ffd250 55%,#f8b030);border:0.6px solid #f8c060;border-radius:1px;"></div>
<div class="t" style="left:661.95px;top:463.00px;color:#1e1e1e;font-family:'Liberation Sans', sans-serif;font-size:4.9px;">Peaks</div>
<div class="r" style="left:681.2px;top:461.9px;width:22.30px;height:5.10px;background:linear-gradient(#fff0a0,#ffd250 55%,#f8b030);border:0.6px solid #f8c060;border-radius:1px;"></div>
<div class="t" style="left:685.28px;top:463.00px;color:#1e1e1e;font-family:'Liberation Sans', sans-serif;font-size:4.9px;">Colors</div>
<div class="t" style="left:715.60px;top:463.00px;color:#555555;font-family:'Liberation Sans', sans-serif;font-size:4.8px;">Filter</div>
<div class="r" style="left:729.4px;top:460.6px;width:13.20px;height:6.30px;background:#fffcf4;border:0.7px solid #d8e4e4;"></div>
<div class="t" style="left:733.22px;top:462.00px;color:#111111;font-family:'Liberation Sans', sans-serif;font-size:5.0px;">30</div>
<div class="r" style="left:751.2px;top:461.9px;width:29.40px;height:5.10px;background:linear-gradient(#fbfaf0,#e6e3d6 50%,#9c9a94);border-radius:1px;"></div>
<div class="t" style="left:754.71px;top:463.00px;color:#1e1e1e;font-family:'Liberation Sans', sans-serif;font-size:4.9px;">Trim scale</div>
<div class="r" style="left:8px;top:472.2px;width:784.00px;height:8.40px;background:#000000;"></div>
<div class="r" style="left:8px;top:472.2px;width:7.00px;height:8.40px;background:#285577;border:0.5px solid #4c7899;"></div>
<div class="t" style="left:10.19px;top:475.00px;color:#ffffff;font-family:'Liberation Mono', monospace;font-size:4.7px;">1</div>
<div class="t" style="left:489.00px;top:475.00px;color:#00cc00;font-family:'Liberation Mono', monospace;font-size:4.6px;transform:scaleX(0.886);-webkit-text-stroke-width:0;">fe80::5054:ff:fe12:3456</div>
<div class="t" style="left:548.75px;top:475.00px;color:#e00000;font-family:'Liberation Mono', monospace;font-size:4.6px;transform:scaleX(0.886);-webkit-text-stroke-width:0;">W: down</div>
<div class="t" style="left:570.00px;top:475.00px;color:#00cc00;font-family:'Liberation Mono', monospace;font-size:4.6px;transform:scaleX(0.886);-webkit-text-stroke-width:0;">E: 10.0.2.15 (0 Mbit/s)</div>
<div class="t" style="left:630.00px;top:475.00px;color:#ffffff;font-family:'Liberation Mono', monospace;font-size:4.6px;transform:scaleX(0.886);-webkit-text-stroke-width:0;">No battery</div>
<div class="t" style="left:657.70px;top:475.00px;color:#ffffff;font-family:'Liberation Mono', monospace;font-size:4.6px;transform:scaleX(0.886);-webkit-text-stroke-width:0;">86.4 GiB</div>
<div class="t" style="left:681.50px;top:475.00px;color:#ffffff;font-family:'Liberation Mono', monospace;font-size:4.6px;transform:scaleX(0.886);-webkit-text-stroke-width:0;">2.17</div>
<div class="t" style="left:695.00px;top:475.00px;color:#ffffff;font-family:'Liberation Mono', monospace;font-size:4.6px;transform:scaleX(0.886);-webkit-text-stroke-width:0;">430.3 MiB | 3.2 GiB</div>
<div class="t" style="left:745.20px;top:475.00px;color:#ffffff;font-family:'Liberation Mono', monospace;font-size:4.6px;transform:scaleX(0.886);-webkit-text-stroke-width:0;">2025-04-05 11:17:35</div>
<div class="r" style="left:547.3px;top:473.2px;width:0.80px;height:6.40px;background:#3c3c3c;"></div>
<div class="r" style="left:567.8px;top:473.2px;width:0.80px;height:6.40px;background:#3c3c3c;"></div>
<div class="r" style="left:627.6px;top:473.2px;width:0.80px;height:6.40px;background:#3c3c3c;"></div>
<div class="r" style="left:655.8px;top:473.2px;width:0.80px;height:6.40px;background:#3c3c3c;"></div>
<div class="r" style="left:679.6px;top:473.2px;width:0.80px;height:6.40px;background:#3c3c3c;"></div>
<div class="r" style="left:693.0px;top:473.2px;width:0.80px;height:6.40px;background:#3c3c3c;"></div>
<div class="r" style="left:743.2px;top:473.2px;width:0.80px;height:6.40px;background:#3c3c3c;"></div>
</body></html>
